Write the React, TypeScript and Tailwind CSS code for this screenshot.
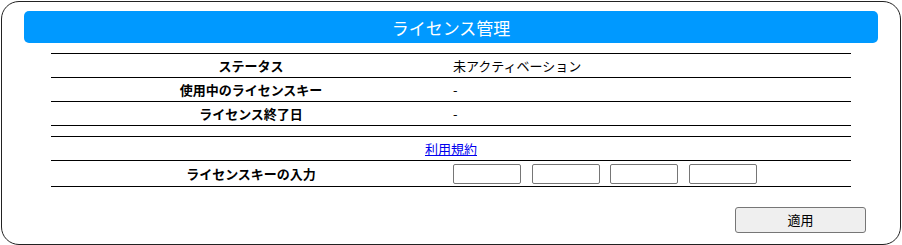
const rows = [
  { label: "ステータス", value: "未アクティベーション" },
  { label: "使用中のライセンスキー", value: "-" },
  { label: "ライセンス終了日", value: "-" },
];

const App = () => {
  return (
    <div
      className="m-[1px] w-[900px] h-[244px] border border-[#222] rounded-[18px] bg-white text-black flex flex-col"
      style={{ fontFamily: '"Noto Sans CJK JP", "Noto Sans", sans-serif' }}
    >
      <div className="mx-[22px] mt-[9px] h-[32px] rounded-[5px] bg-[#0099ff] flex items-center justify-center">
        <h1 className="text-[17px] text-white leading-none">ライセンス管理</h1>
      </div>

      <table className="mt-[10px] mx-auto w-[800px] border-collapse text-[13px]">
        <tbody>
          {rows.map((row) => (
            <tr key={row.label} className="h-[24px] border-y border-black">
              <th className="w-[400px] p-0 font-bold text-center">{row.label}</th>
              <td className="pl-[2px] py-0">{row.value}</td>
            </tr>
          ))}
          <tr className="h-[11px] border-y border-black">
            <td colSpan={2} className="p-0"></td>
          </tr>
          <tr className="h-[24px] border-y border-black">
            <td colSpan={2} className="p-0 text-center">
              <a href="#" className="text-[#0000ee] underline">
                利用規約
              </a>
            </td>
          </tr>
          <tr className="h-[26px] border-y border-black">
            <th className="w-[400px] p-0 font-bold text-center">ライセンスキーの入力</th>
            <td className="pl-[2px] py-0">
              <div className="flex gap-[10.5px]">
                <input className="w-[68px] h-[20px] border border-[#767676] rounded-[2px]" />
                <input className="w-[68px] h-[20px] border border-[#767676] rounded-[2px]" />
                <input className="w-[68px] h-[20px] border border-[#767676] rounded-[2px]" />
                <input className="w-[68px] h-[20px] border border-[#767676] rounded-[2px]" />
              </div>
            </td>
          </tr>
        </tbody>
      </table>

      <div className="mt-[20px] flex justify-end pr-[34px]">
        <button className="w-[131px] h-[26px] border border-[#767676] rounded-[3px] bg-[#efefef] text-[13px]">
          適用
        </button>
      </div>
    </div>
  );
};

export default App;
